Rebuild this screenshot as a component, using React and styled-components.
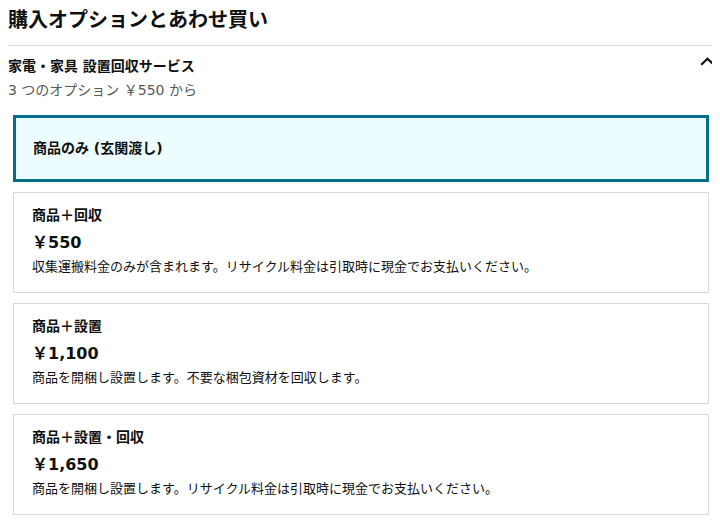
import React, { useState } from "react";
import styled, { createGlobalStyle, css } from "styled-components";

const GlobalStyle = createGlobalStyle`
  body {
    margin: 8px;
    background: #ffffff;
    color: #0f1111;
    font-family: "DejaVu Sans", "Noto Sans CJK JP", sans-serif;
  }
`;

const options = [
  { id: "none", title: "商品のみ (玄関渡し)" },
  {
    id: "pickup",
    title: "商品＋回収",
    price: "￥550",
    note: "収集運搬料金のみが含まれます。リサイクル料金は引取時に現金でお支払いください。",
  },
  {
    id: "install",
    title: "商品＋設置",
    price: "￥1,100",
    note: "商品を開梱し設置します。不要な梱包資材を回収します。",
  },
  {
    id: "both",
    title: "商品＋設置・回収",
    price: "￥1,650",
    note: "商品を開梱し設置します。リサイクル料金は引取時に現金でお支払いください。",
  },
];

function App() {
  const [selected, setSelected] = useState("none");
  return (
    <>
      <GlobalStyle />
      <Heading>購入オプションとあわせ買い</Heading>
      <Divider />
      <SectionHeader>
        <div>
          <ServiceName>家電・家具 設置回収サービス</ServiceName>
          <Summary>3 つのオプション ￥550 から</Summary>
        </div>
        <Chevron width="15" height="9" viewBox="0 0 15 9">
          <path d="M1.2 7.8 L7.5 1.8 L13.8 7.8" fill="none" stroke="#0f1111" strokeWidth="2.2" />
        </Chevron>
      </SectionHeader>
      <OptionList>
        {options.map((o) => (
          <OptionCard
            key={o.id}
            $selected={selected === o.id}
            $compact={!o.price}
            onClick={() => setSelected(o.id)}
          >
            <OptionTitle>{o.title}</OptionTitle>
            {o.price && <Price>{o.price}</Price>}
            {o.note && <Note>{o.note}</Note>}
          </OptionCard>
        ))}
      </OptionList>
    </>
  );
}

const Heading = styled.h2`
  margin: 0;
  font-size: 20px;
  line-height: 24px;
  font-weight: 700;
  padding-bottom: 13px;
`;

const Divider = styled.hr`
  margin: 0;
  border: 0;
  border-top: 1px solid #d5d9d9;
`;

const SectionHeader = styled.div`
  display: flex;
  justify-content: space-between;
  align-items: flex-start;
  padding-top: 8px;
`;

const ServiceName = styled.div`
  font-size: 14px;
  line-height: 24px;
  font-weight: 700;
`;

const Summary = styled.div`
  font-size: 14px;
  line-height: 24px;
  color: #565959;
`;

const Chevron = styled.svg`
  margin-top: 3px;
  margin-right: -3px;
`;

const OptionList = styled.div`
  display: flex;
  flex-direction: column;
  gap: 10px;
  margin-top: 13px;
  padding: 0 3px 0 5px;
`;

const OptionCard = styled.div`
  border: 1px solid #d5d9d9;
  padding: 12px 18px 15px;
  cursor: pointer;
  ${(p) =>
    p.$selected &&
    css`
      border: 3px solid #007185;
      background: #edfdff;
      padding-left: 17px;
    `}
  ${(p) =>
    p.$compact &&
    css`
      padding-top: 20px;
      padding-bottom: 21px;
    `}
`;

const OptionTitle = styled.div`
  font-size: 14px;
  line-height: 20px;
  font-weight: 700;
`;

const Price = styled.div`
  margin-top: 6px;
  font-size: 16px;
  line-height: 24px;
  font-weight: 700;
`;

const Note = styled.div`
  margin-top: 2px;
  font-size: 13px;
  line-height: 20px;
`;

export default App;
